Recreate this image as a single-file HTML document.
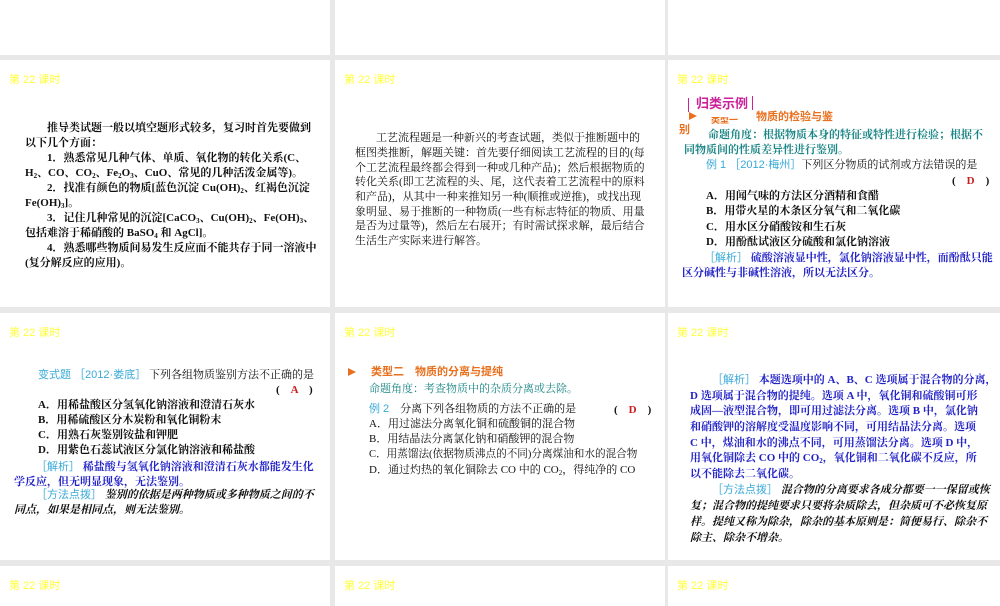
<!DOCTYPE html>
<html><head><meta charset="utf-8"><style>
*{margin:0;padding:0;box-sizing:border-box}
body{width:1000px;height:600px;background:#e8e8e8;position:relative;overflow:hidden;font-family:"Liberation Serif","Noto Serif CJK SC",serif;}
.s{position:absolute;background:#fff;overflow:hidden}
.h{position:absolute;left:9px;font-family:"Liberation Sans","Noto Sans CJK SC",sans-serif;font-size:11px;color:#ffff3c}
.l{position:absolute;white-space:nowrap;font-size:11px;line-height:14px;color:#111;font-weight:bold}
.tl{color:#1a8585}.lb{color:#3aaad8;font-family:"Liberation Sans","Noto Sans CJK SC",sans-serif;font-weight:normal}
.bl{color:#2323c8}.or{color:#e8701e;font-family:"Liberation Sans","Noto Sans CJK SC",sans-serif}
.rd{color:#c82020}.it{font-style:italic}
sub{font-size:7px;vertical-align:-2px}
</style></head><body>
<!-- row 1 -->
<div class="s" style="left:0;top:0;width:330px;height:55px"></div>
<div class="s" style="left:335px;top:0;width:330px;height:55px"></div>
<div class="s" style="left:668px;top:0;width:332px;height:55px"></div>
<!-- row 2 -->
<div class="s" style="left:0;top:60px;width:330px;height:247px">
<div class="h" style="top:11px">第 22 课时</div>
<div class="l" style="left:47px;top:61px">推导类试题一般以填空题形式较多，复习时首先要做到</div>
<div class="l" style="left:25px;top:76px">以下几个方面：</div>
<div class="l" style="left:47px;top:91px">1．熟悉常见几种气体、单质、氧化物的转化关系(C、</div>
<div class="l" style="left:25px;top:106px">H<sub>2</sub>、CO、CO<sub>2</sub>、Fe<sub>2</sub>O<sub>3</sub>、CuO、常见的几种活泼金属等)。</div>
<div class="l" style="left:47px;top:121px">2．找准有颜色的物质[蓝色沉淀 Cu(OH)<sub>2</sub>、红褐色沉淀</div>
<div class="l" style="left:25px;top:136px">Fe(OH)<sub>3</sub>]。</div>
<div class="l" style="left:47px;top:151px">3．记住几种常见的沉淀[CaCO<sub>3</sub>、Cu(OH)<sub>2</sub>、Fe(OH)<sub>3</sub>、</div>
<div class="l" style="left:25px;top:166px">包括难溶于稀硝酸的 BaSO<sub>4</sub> 和 AgCl]。</div>
<div class="l" style="left:47px;top:181px">4．熟悉哪些物质间易发生反应而不能共存于同一溶液中</div>
<div class="l" style="left:25px;top:196px">(复分解反应的应用)。</div>
</div>
<div class="s" style="left:335px;top:60px;width:330px;height:247px">
<div class="h" style="top:11px">第 22 课时</div>
<div class="l" style="left:41px;top:71px;font-weight:normal">工艺流程题是一种新兴的考查试题，类似于推断题中的</div>
<div class="l" style="left:20px;top:86px;font-weight:normal">框图类推断，解题关键：首先要仔细阅读工艺流程的目的(每</div>
<div class="l" style="left:20px;top:101px;font-weight:normal">个工艺流程最终都会得到一种或几种产品)；然后根据物质的</div>
<div class="l" style="left:20px;top:115px;font-weight:normal">转化关系(即工艺流程的头、尾，这代表着工艺流程中的原料</div>
<div class="l" style="left:20px;top:130px;font-weight:normal">和产品)，从其中一种来推知另一种(顺推或逆推)，或找出现</div>
<div class="l" style="left:20px;top:145px;font-weight:normal">象明显、易于推断的一种物质(一些有标志特征的物质、用量</div>
<div class="l" style="left:20px;top:159px;font-weight:normal">是否为过量等)，然后左右展开；有时需试探求解，最后结合</div>
<div class="l" style="left:20px;top:174px;font-weight:normal">生活生产实际来进行解答。</div>
</div>
<div class="s" style="left:668px;top:60px;width:332px;height:247px">
<div class="h" style="top:11px">第 22 课时</div>
<div style="position:absolute;left:20px;top:38px;width:1px;height:14px;background:#cc2299"></div>
<div style="position:absolute;left:84px;top:36px;width:1px;height:14px;background:#cc2299"></div>
<div class="l" style="left:28px;top:37px;color:#cc2299;font-size:13px;font-family:'Liberation Sans','Noto Sans CJK SC',sans-serif">归类示例</div>
<div style="position:absolute;left:21px;top:52px;width:0;height:0;border-left:8px solid #e8701e;border-top:4px solid transparent;border-bottom:4px solid transparent"></div>
<div class="l or" style="left:43px;top:53px;font-size:9px;clip-path:inset(4px 0 0 0)">类型一</div>
<div class="l or" style="left:88px;top:50px">物质的检验与鉴</div>
<div class="l or" style="left:11px;top:63px">别</div>
<div class="l tl" style="left:40px;top:68px">命题角度：根据物质本身的特征或特性进行检验；根据不</div>
<div class="l tl" style="left:16px;top:83px">同物质间的性质差异性进行鉴别。</div>
<div class="l" style="left:38px;top:98px;font-weight:normal"><span class="lb">例 1 ［2012·梅州］</span>下列区分物质的试剂或方法错误的是</div>
<div class="l" style="left:284px;top:114px">(　<span class="rd">D</span>　)</div>
<div class="l" style="left:38px;top:129px">A．用闻气味的方法区分酒精和食醋</div>
<div class="l" style="left:38px;top:144px">B．用带火星的木条区分氧气和二氧化碳</div>
<div class="l" style="left:38px;top:160px">C．用水区分硝酸铵和生石灰</div>
<div class="l" style="left:38px;top:175px">D．用酚酞试液区分硫酸和氯化钠溶液</div>
<div class="l bl" style="left:36px;top:191px"><span class="lb">［解析］</span> 硫酸溶液显中性，氯化钠溶液显中性，而酚酞只能</div>
<div class="l bl" style="left:14px;top:206px">区分碱性与非碱性溶液，所以无法区分。</div>
</div>
<!-- row 3 -->
<div class="s" style="left:0;top:313px;width:330px;height:247px">
<div class="h" style="top:11px">第 22 课时</div>
<div class="l" style="left:38px;top:55px;font-weight:normal"><span class="lb">变式题 ［2012·娄底］</span> 下列各组物质鉴别方法不正确的是</div>
<div class="l" style="left:276px;top:70px">(　<span class="rd">A</span>　)</div>
<div class="l" style="left:38px;top:85px">A．用稀盐酸区分氢氧化钠溶液和澄清石灰水</div>
<div class="l" style="left:38px;top:100px">B．用稀硫酸区分木炭粉和氧化铜粉末</div>
<div class="l" style="left:38px;top:115px">C．用熟石灰鉴别铵盐和钾肥</div>
<div class="l" style="left:38px;top:130px">D．用紫色石蕊试液区分氯化钠溶液和稀盐酸</div>
<div class="l bl" style="left:36px;top:147px"><span class="lb">［解析］</span> 稀盐酸与氢氧化钠溶液和澄清石灰水都能发生化</div>
<div class="l bl" style="left:14px;top:162px">学反应，但无明显现象，无法鉴别。</div>
<div class="l it" style="left:36px;top:175px"><span class="lb" style="font-style:normal">［方法点拨］</span> 鉴别的依据是两种物质或多种物质之间的不</div>
<div class="l it" style="left:14px;top:190px">同点，如果是相同点，则无法鉴别。</div>
</div>
<div class="s" style="left:335px;top:313px;width:330px;height:247px">
<div class="h" style="top:11px">第 22 课时</div>
<div style="position:absolute;left:13px;top:55px;width:0;height:0;border-left:8px solid #e8701e;border-top:4px solid transparent;border-bottom:4px solid transparent"></div>
<div class="l or" style="left:36px;top:52px">类型二　物质的分离与提纯</div>
<div class="l tl" style="left:34px;top:69px;font-weight:normal">命题角度：考查物质中的杂质分离或去除。</div>
<div class="l" style="left:34px;top:89px;font-weight:normal"><span class="lb">例 2</span>　分离下列各组物质的方法不正确的是</div>
<div class="l" style="left:279px;top:90px">(　<span class="rd">D</span>　)</div>
<div class="l" style="left:34px;top:104px;font-weight:normal">A．用过滤法分离氧化铜和硫酸铜的混合物</div>
<div class="l" style="left:34px;top:119px;font-weight:normal">B．用结晶法分离氯化钠和硝酸钾的混合物</div>
<div class="l" style="left:34px;top:135px;font-weight:normal;font-size:10.6px">C．用蒸馏法(依据物质沸点的不同)分离煤油和水的混合物</div>
<div class="l" style="left:34px;top:150px;font-weight:normal">D．通过灼热的氧化铜除去 CO 中的 CO<sub>2</sub>，得纯净的 CO</div>
</div>
<div class="s" style="left:668px;top:313px;width:332px;height:247px">
<div class="h" style="top:11px">第 22 课时</div>
<div class="l bl" style="left:44px;top:60px"><span class="lb">［解析］</span> 本题选项中的 A、B、C 选项属于混合物的分离，</div>
<div class="l bl" style="left:22px;top:76px">D 选项属于混合物的提纯。选项 A 中，氧化铜和硫酸铜可形</div>
<div class="l bl" style="left:22px;top:91px">成固—液型混合物，即可用过滤法分离。选项 B 中，氯化钠</div>
<div class="l bl" style="left:22px;top:107px">和硝酸钾的溶解度受温度影响不同，可用结晶法分离。选项</div>
<div class="l bl" style="left:22px;top:123px">C 中，煤油和水的沸点不同，可用蒸馏法分离。选项 D 中，</div>
<div class="l bl" style="left:22px;top:138px">用氧化铜除去 CO 中的 CO<sub>2</sub>，氧化铜和二氧化碳不反应，所</div>
<div class="l bl" style="left:22px;top:154px">以不能除去二氧化碳。</div>
<div class="l it" style="left:44px;top:170px"><span class="lb" style="font-style:normal">［方法点拨］</span> 混合物的分离要求各成分都要一一保留或恢</div>
<div class="l it" style="left:22px;top:186px">复；混合物的提纯要求只要将杂质除去，但杂质可不必恢复原</div>
<div class="l it" style="left:22px;top:202px">样。提纯又称为除杂，除杂的基本原则是：简便易行、除杂不</div>
<div class="l it" style="left:22px;top:218px">除主、除杂不增杂。</div>
</div>
<!-- row 4 -->
<div class="s" style="left:0;top:566px;width:330px;height:40px"><div class="h" style="top:11px">第 22 课时</div></div>
<div class="s" style="left:335px;top:566px;width:330px;height:40px"><div class="h" style="top:11px">第 22 课时</div></div>
<div class="s" style="left:668px;top:566px;width:332px;height:40px"><div class="h" style="top:11px">第 22 课时</div></div>
</body></html>
